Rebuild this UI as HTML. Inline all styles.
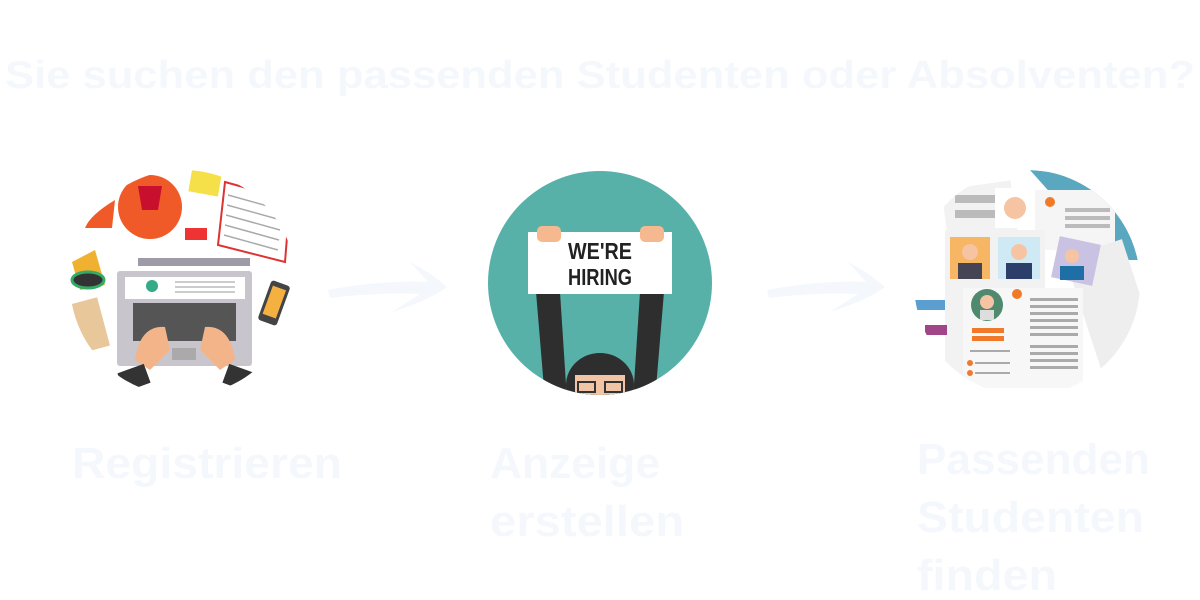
<!DOCTYPE html>
<html><head><meta charset="utf-8"><style>
html,body{margin:0;padding:0;background:#fff;width:1200px;height:600px;overflow:hidden}
svg{display:block}
text{font-family:"Liberation Sans",sans-serif;font-weight:bold;fill:#f4f8fc}
</style></head><body>
<svg width="1200" height="600" viewBox="0 0 1200 600">
<defs>
<clipPath id="c1"><circle cx="183" cy="283" r="113"/></clipPath>
<clipPath id="c2"><circle cx="600" cy="283" r="112"/></clipPath>
<clipPath id="c3"><circle cx="1027" cy="283" r="113"/></clipPath>
</defs>
<text x="5" y="88" font-size="39" textLength="1190" lengthAdjust="spacingAndGlyphs">Sie suchen den passenden Studenten oder Absolventen?</text>

<!-- circle 1 -->
<g clip-path="url(#c1)">
<rect x="60" y="160" width="250" height="250" fill="#fff"/>
<path d="M115 200 Q90 215 85 228 L112 228 Z" fill="#f05a28"/>
<circle cx="150" cy="207" r="32" fill="#f05a28"/>
<path d="M138 186 L162 186 L158 210 L142 210 Z" fill="#c8102e"/>
<rect x="190" y="172" width="30" height="22" fill="#f5e04a" transform="rotate(10 205 183)"/>
<rect x="185" y="228" width="22" height="12" fill="#e33" />
<path d="M225 182 L290 200 L285 262 L218 245 Z" fill="#fff" stroke="#d33" stroke-width="2"/>
<g stroke="#aaa" stroke-width="1.5"><line x1="228" y1="195" x2="282" y2="210"/><line x1="227" y1="205" x2="281" y2="220"/><line x1="226" y1="215" x2="280" y2="230"/><line x1="225" y1="225" x2="279" y2="240"/><line x1="224" y1="235" x2="278" y2="250"/></g>
<rect x="138" y="258" width="112" height="8" fill="#9e9aa8"/>
<rect x="117" y="271" width="135" height="95" rx="3" fill="#c8c6cc"/>
<rect x="125" y="277" width="120" height="22" fill="#fff"/>
<circle cx="152" cy="286" r="6" fill="#3a8"/>
<g stroke="#bbb" stroke-width="1.5"><line x1="175" y1="282" x2="235" y2="282"/><line x1="175" y1="287" x2="235" y2="287"/><line x1="175" y1="292" x2="235" y2="292"/></g>
<rect x="133" y="303" width="103" height="38" fill="#555"/>
<rect x="172" y="348" width="24" height="12" fill="#aaa"/>
<path d="M135 360 Q140 325 165 327 L170 350 L150 370 Z" fill="#f4b48a"/>
<path d="M235 360 Q230 325 205 327 L200 350 L220 370 Z" fill="#f4b48a"/>
<rect x="120" y="368" width="28" height="20" fill="#333" transform="rotate(-20 134 378)"/>
<rect x="225" y="368" width="28" height="20" fill="#333" transform="rotate(20 239 378)"/>
<path d="M72 262 L95 250 L105 285 L80 290 Z" fill="#f0b030"/>
<ellipse cx="88" cy="280" rx="16" ry="8" fill="#333" stroke="#3a6" stroke-width="3"/>
<rect x="76" y="300" width="28" height="50" fill="#e8c79a" transform="rotate(-15 90 325)"/>
<rect x="264" y="282" width="20" height="42" rx="3" fill="#444" transform="rotate(20 274 303)"/>
<rect x="267" y="287" width="14" height="30" fill="#f4b040" transform="rotate(20 274 303)"/>
</g>
<path d="M328 290 Q380 280 428 282 L410 262 Q430 272 447 287 Q430 300 392 312 L420 294 Q380 292 330 298 Z" fill="#f4f8fc"/>

<!-- circle 2 -->
<g clip-path="url(#c2)">
<rect x="480" y="160" width="240" height="240" fill="#57b1a9"/>
<path d="M536 292 L560 292 L567 400 L545 400 Z" fill="#2e2e2e"/>
<path d="M640 292 L664 292 L655 400 L633 400 Z" fill="#2e2e2e"/>
<ellipse cx="600" cy="385" rx="34" ry="32" fill="#2e2e2e"/>
<rect x="575" y="375" width="50" height="30" fill="#f0c4a4"/>
<rect x="578" y="382" width="17" height="10" fill="none" stroke="#333" stroke-width="2"/>
<rect x="605" y="382" width="17" height="10" fill="none" stroke="#333" stroke-width="2"/>
<rect x="528" y="232" width="144" height="62" fill="#fff"/>
<rect x="537" y="226" width="24" height="16" rx="5" fill="#f5b88f"/>
<rect x="640" y="226" width="24" height="16" rx="5" fill="#f5b88f"/>
<text x="600" y="259" font-size="23" text-anchor="middle" style="fill:#222" textLength="64" lengthAdjust="spacingAndGlyphs">WE'RE</text>
<text x="600" y="285" font-size="23" text-anchor="middle" style="fill:#222" textLength="64" lengthAdjust="spacingAndGlyphs">HIRING</text>
</g>
<path d="M767 290 Q820 280 866 282 L848 262 Q868 272 885 287 Q868 300 830 312 L858 294 Q820 292 769 298 Z" fill="#f4f8fc"/>

<!-- circle 3 -->
<g clip-path="url(#c3)">
<rect x="905" y="165" width="250" height="240" fill="#fff"/>
<path d="M1030 170 L1140 180 L1140 260 L1110 260 Z" fill="#5aa7c0"/>
<rect x="945" y="185" width="70" height="60" fill="#f2f2f2" transform="rotate(-8 980 215)"/>
<rect x="955" y="195" width="45" height="8" fill="#bbb"/><rect x="955" y="210" width="45" height="8" fill="#bbb"/>
<rect x="1035" y="190" width="80" height="60" fill="#f5f5f5"/>
<circle cx="1050" cy="202" r="5" fill="#f07a2a"/>
<g fill="#bbb"><rect x="1065" y="208" width="45" height="4"/><rect x="1065" y="216" width="45" height="4"/><rect x="1065" y="224" width="45" height="4"/></g>
<rect x="995" y="188" width="40" height="40" fill="#fff"/>
<circle cx="1015" cy="208" r="11" fill="#f6c4a3"/>
<rect x="1085" y="245" width="60" height="140" fill="#eee" transform="rotate(-18 1115 315)"/>
<rect x="945" y="230" width="100" height="150" fill="#f2f2f2"/>
<rect x="950" y="237" width="40" height="42" fill="#f6b664"/>
<circle cx="970" cy="252" r="8" fill="#f6c4a3"/><rect x="958" y="263" width="24" height="16" fill="#445"/>
<rect x="998" y="237" width="42" height="42" fill="#cfe9f5"/>
<circle cx="1019" cy="252" r="8" fill="#f6c4a3"/><rect x="1006" y="263" width="26" height="16" fill="#2b3f6a"/>
<rect x="1055" y="240" width="42" height="42" fill="#c9c2e3" transform="rotate(12 1076 261)"/>
<circle cx="1072" cy="256" r="7" fill="#f6c4a3"/><rect x="1060" y="266" width="24" height="14" fill="#1d6fa5"/>
<rect x="915" y="300" width="30" height="10" fill="#5b9fd1"/>
<rect x="925" y="325" width="22" height="10" fill="#a24488"/>
<rect x="963" y="288" width="120" height="100" fill="#f7f7f7"/>
<circle cx="987" cy="305" r="16" fill="#4f8a6e"/>
<circle cx="987" cy="302" r="7" fill="#f6c4a3"/><rect x="980" y="310" width="14" height="10" fill="#ddd"/>
<rect x="972" y="328" width="32" height="5" fill="#f07a2a"/><rect x="972" y="336" width="32" height="5" fill="#f07a2a"/>
<circle cx="1017" cy="294" r="5" fill="#f07a2a"/>
<g fill="#aaa"><rect x="1030" y="298" width="48" height="3"/><rect x="1030" y="305" width="48" height="3"/><rect x="1030" y="312" width="48" height="3"/><rect x="1030" y="319" width="48" height="3"/><rect x="1030" y="326" width="48" height="3"/><rect x="1030" y="333" width="48" height="3"/><rect x="1030" y="345" width="48" height="3"/><rect x="1030" y="352" width="48" height="3"/><rect x="1030" y="359" width="48" height="3"/><rect x="1030" y="366" width="48" height="3"/><rect x="970" y="350" width="40" height="2"/><rect x="975" y="362" width="35" height="2"/><rect x="975" y="372" width="35" height="2"/></g>
<circle cx="970" cy="363" r="3" fill="#f07a2a"/><circle cx="970" cy="373" r="3" fill="#f07a2a"/>
</g>

<text x="72" y="478" font-size="44" textLength="270" lengthAdjust="spacingAndGlyphs">Registrieren</text>
<text x="490" y="478" font-size="44" textLength="170" lengthAdjust="spacingAndGlyphs">Anzeige</text>
<text x="490" y="536" font-size="44" textLength="194" lengthAdjust="spacingAndGlyphs">erstellen</text>
<text x="917" y="474" font-size="44" textLength="233" lengthAdjust="spacingAndGlyphs">Passenden</text>
<text x="917" y="532" font-size="44" textLength="227" lengthAdjust="spacingAndGlyphs">Studenten</text>
<text x="917" y="590" font-size="44" textLength="140" lengthAdjust="spacingAndGlyphs">finden</text>
</svg>
</body></html>
